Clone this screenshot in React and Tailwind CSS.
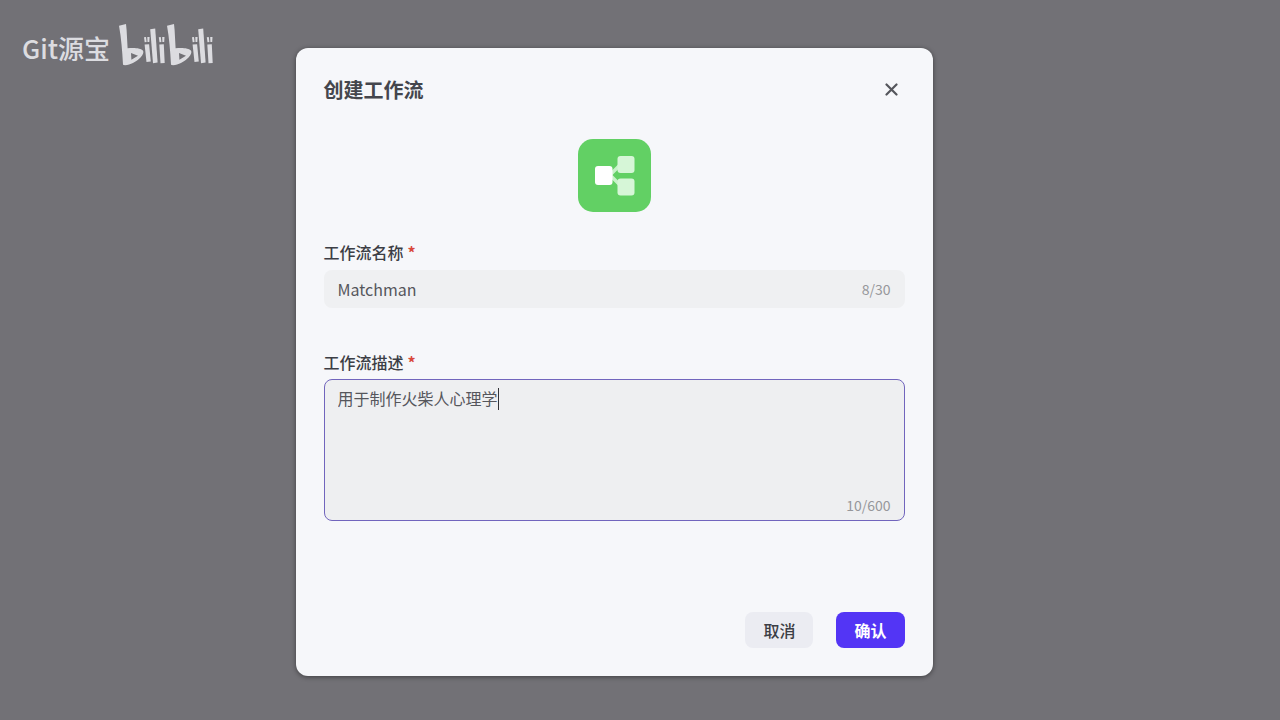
import { useState } from "react";

function Letters() {
  return (
    <>
      <path
        fillRule="evenodd"
        d="M1 1.800 8 0l.6 6 1 18.300c6-.9 13.400-.3 15.400 2.400 2.300 3.500-6.500 13.300-18 14.500l-2-.5C4.300 27 3.200 14 1 1.800ZM13 29l.4 6.800 6.600-4.100Z"
      />
      <path d="m26 13.300 2-.3.600 5-1.900.2ZM29.300 13h2.300l-.3 5h-1.800ZM26.600 20.600l4.500-.4 1.700 17.300-4.300.6Z" />
      <path d="m32.200 5.200 5-.6 2.400 34-4.600.6Z" />
      <path d="m40.800 13.300 2-.3.600 5-1.900.2ZM44.200 13h2.300l-.3 5h-1.800ZM41.300 20.600l4.500-.4.900 18.700-4.200.4Z" />
    </>
  );
}

function BilibiliLogo() {
  return (
    <svg className="h-[43px] w-24" viewBox="0 0 96 43" fill="currentColor" role="img" aria-label="bilibili">
      <g>
        <Letters />
      </g>
      <g transform="translate(48 0)">
        <Letters />
      </g>
    </svg>
  );
}

function WorkflowIcon() {
  return (
    <svg className="size-[73px]" viewBox="0 0 73 73" aria-hidden="true">
      <rect width="73" height="73" rx="15" fill="#62d064" />
      <path d="M31 37 42 26M31 35l11 11" stroke="#c8f2c9" strokeWidth="3.500" />
      <rect x="39.500" y="17" width="17" height="17" rx="3" fill="#d6f6d7" />
      <rect x="39.500" y="39.500" width="17" height="17" rx="3" fill="#d6f6d7" />
      <rect x="17" y="27" width="17.500" height="19" rx="3" fill="#fff" />
    </svg>
  );
}

function FieldLabel({ htmlFor, children }) {
  return (
    <label htmlFor={htmlFor} className="flex gap-1 text-base leading-6 font-medium text-[#3c3e45]">
      {children}
      <span className="font-bold text-[#d9483b]">*</span>
    </label>
  );
}

export default function App() {
  const [name, setName] = useState("Matchman");
  const [description, setDescription] = useState("用于制作火柴人心理学");
  const [caretVisible, setCaretVisible] = useState(true);

  return (
    <div className="relative flex min-h-screen items-start justify-center bg-[#727176] pt-12 pr-[52px] pb-11 font-['Noto_Sans_CJK_SC','Noto_Sans',sans-serif]">
      <div className="absolute top-6 left-[22px] flex items-center gap-2 text-[#dcdce0]">
        <span className="pt-1 text-[26px] leading-8 font-medium">Git源宝</span>
        <BilibiliLogo />
      </div>

      <section
        role="dialog"
        aria-labelledby="dialog-title"
        className="w-full max-w-[637px] rounded-xl bg-[#f6f7fa] p-7 shadow-[0_1px_5px_rgba(0,0,0,0.45)]"
      >
        <header className="flex items-center justify-between">
          <h1 id="dialog-title" className="text-xl leading-7 font-bold text-[#44464d]">
            创建工作流
          </h1>
          <button type="button" aria-label="关闭" className="flex size-7 items-center justify-center text-[#55565c]">
            <svg className="size-3.5" viewBox="0 0 14 14" fill="none" stroke="currentColor" strokeWidth="2.200" strokeLinecap="round">
              <path d="m2.500 1.500 10 10m0-10-10 10" />
            </svg>
          </button>
        </header>

        <div className="mt-[35px] flex justify-center">
          <WorkflowIcon />
        </div>

        <form onSubmit={(e) => e.preventDefault()}>
          <div className="mt-7">
            <FieldLabel htmlFor="workflow-name">工作流名称</FieldLabel>
            <div className="mt-1.5 flex h-[38px] items-center rounded-lg bg-[#eff0f2] px-3.5">
              <input
                id="workflow-name"
                type="text"
                maxLength={30}
                value={name}
                onChange={(e) => setName(e.target.value)}
                className="min-w-0 flex-1 bg-transparent text-base leading-6 text-[#55565c] outline-none"
              />
              <span className="text-sm leading-5 text-[#96979b]">{name.length}/30</span>
            </div>
          </div>

          <div className="mt-[42px]">
            <FieldLabel htmlFor="workflow-description">工作流描述</FieldLabel>
            <div className="relative mt-[5px] flex flex-col rounded-lg border border-[#7165bd] bg-[#eeeff1] px-[13px] pt-1.5 pb-[5px]">
              <textarea
                id="workflow-description"
                maxLength={600}
                value={description}
                onChange={(e) => {
                  setDescription(e.target.value);
                  setCaretVisible(false);
                }}
                className="h-[109px] w-full resize-none bg-transparent text-base leading-6 text-[#55565c] outline-none"
              />
              {caretVisible && <span className="absolute top-2 left-[173px] h-[22px] w-px bg-[#333338]" />}
              <span className="self-end text-sm leading-5 text-[#96979b]">{description.length}/600</span>
            </div>
          </div>

          <div className="mt-[91px] flex justify-end gap-[23px]">
            <button type="button" className="h-9 rounded-lg bg-[#ebecf2] px-[18px] text-base leading-6 font-medium text-[#3c3e45]">
              取消
            </button>
            <button type="submit" className="h-9 rounded-lg bg-[#5335f5] px-[18px] text-base leading-6 font-bold text-white">
              确认
            </button>
          </div>
        </form>
      </section>
    </div>
  );
}
